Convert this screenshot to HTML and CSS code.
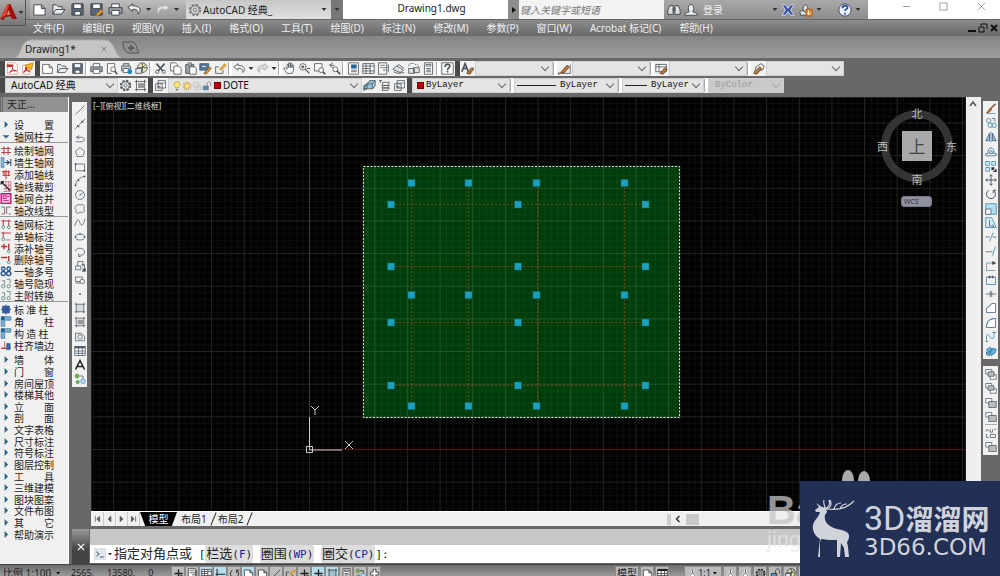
FILE: index.html
```html
<!DOCTYPE html>
<html lang="zh-CN">
<head>
<meta charset="utf-8">
<title>Drawing1.dwg</title>
<link rel="stylesheet" href="styles.css">
</head>
<body>
<svg class="sprite" aria-hidden="true">
  <symbol id="new" viewBox="0 0 16 16"><path d="M2 3h8l4 4v7H2zM10 3v4h4" fill="#fff"/></symbol>
  <symbol id="open" viewBox="0 0 16 16"><path d="M2 13V3h4l2 2h4v3M2 13l3-5h10l-4 5z" fill="#e8eaee"/></symbol>
  <symbol id="save" viewBox="0 0 16 16"><path d="M2 2h12v12H2z" fill="#5c6876"/><path d="M4 2h8v5H4zM5 10h6v4H5z" fill="#fff"/></symbol>
  <symbol id="saveas" viewBox="0 0 16 16"><path d="M2 2h12v12H2z" fill="#5c6876"/><path d="M4 2h8v5H4z" fill="#fff"/><path d="M7 14l6-6 2 2-6 5z" fill="#e9a83a" stroke="#a66a10"/></symbol>
  <symbol id="print" viewBox="0 0 16 16"><path d="M4 6V2h8v4" fill="#fff"/><path d="M1 6h14v6H1z" fill="#9aa0a8"/><path d="M4 9h8v5H4z" fill="#fff"/></symbol>
  <symbol id="undo" viewBox="0 0 16 16"><path d="M6 2L1 6l5 4V8c4-1 6 1 6 5 4-4 2-9-6-9z" fill="#eee"/></symbol>
  <symbol id="redo" viewBox="0 0 16 16"><path d="M10 2l5 4-5 4V8c-4-1-6 1-6 5-4-4-2-9 6-9z" fill="#ddd" stroke="#aaa"/></symbol>
  <symbol id="gear" viewBox="0 0 16 16"><circle cx="8" cy="8" r="6" stroke-dasharray="3 1.7" stroke-width="2"/><circle cx="8" cy="8" r="4.7"/><circle cx="8" cy="8" r="2"/></symbol>
  <symbol id="pdf" viewBox="0 0 16 16"><path d="M2 1h9l3 3v11H2z" fill="#fff" stroke="#d99"/><path d="M1 3h8v3H1z" fill="#c22" stroke="none"/><path d="M4 13c4-3 5-6 4-6s1 5 5 4c-3-1-6 0-9 2" stroke="#b11"/></symbol>
  <symbol id="pdfmail" viewBox="0 0 16 16"><path d="M2 4h9v11H2z" fill="#fff" stroke="#d99"/><path d="M5 4l10-3-2 8-6-1z" fill="#f2b91e" stroke="#c88a10"/><path d="M3 13c4-3 4-6 3-6s1 5 5 4" stroke="#b11" stroke-width="1.5"/></symbol>
  <symbol id="preview" viewBox="0 0 16 16"><path d="M3 14V2h9v4M3 14h5" fill="#fff"/><circle cx="10" cy="9" r="3"/><path d="M12 11l3 4" stroke-width="2"/></symbol>
  <symbol id="publish" viewBox="0 0 16 16"><path d="M4 5V2h7v3M2 5h11v6H2z" fill="#ccd0d4"/><path d="M4 8h7v5H4z" fill="#fff"/><circle cx="12" cy="12" r="3" fill="#1c87c9" stroke="none"/></symbol>
  <symbol id="globe" viewBox="0 0 16 16"><circle cx="9" cy="7" r="6" fill="#e8e3bb"/><path d="M9 1v12M3 7h12M9 7l4-4"/><path d="M1 8h7v6H1z" fill="#dfe8ee"/></symbol>
  <symbol id="cut" viewBox="0 0 16 16"><path d="M3 2l8 9M13 2L5 11" stroke-width="2"/><circle cx="4" cy="12" r="2"/><circle cx="12" cy="12" r="2"/></symbol>
  <symbol id="copy" viewBox="0 0 16 16"><path d="M2 1h6l2 2v8H2z" fill="#fff"/><path d="M6 5h6l3 3v7H6z" fill="#fff"/></symbol>
  <symbol id="paste" viewBox="0 0 16 16"><path d="M2 3h10v11H2z" fill="#9aa0a8"/><path d="M5 1h4v3H5z" fill="#ddd"/><path d="M7 6h6l2 2v7H7z" fill="#fff"/></symbol>
  <symbol id="match" viewBox="0 0 16 16"><path d="M1 2h11v8H1z" fill="#3f7fb5"/><path d="M3 4h6v3H3z" fill="#dde"/><path d="M6 14l7-8 2 2-6 7z" fill="#d59a3c" stroke="#84541c"/></symbol>
  <symbol id="block" viewBox="0 0 16 16"><path d="M2 6v8h9v-4M2 6h4"/><path d="M7 9l6-7 2 2-6 6z" fill="#f1b640" stroke="#b9801a"/></symbol>
  <symbol id="hand" viewBox="0 0 16 16"><path d="M5 14L1 8l2-1 2 2V3h2v4-6h2v6-5h2v5-3h2v6l-2 4z" fill="#fff"/></symbol>
  <symbol id="zoom" viewBox="0 0 16 16"><circle cx="6" cy="6" r="4" fill="#fff"/><path d="M6 4v4M4 6h4M9 9l5 5M11 8h4" stroke-width="1.5"/></symbol>
  <symbol id="zoomwin" viewBox="0 0 16 16"><path d="M2 2h9v9H2z" fill="#fff"/><circle cx="10" cy="10" r="3" fill="#fff"/><path d="M12 12l3 3" stroke-width="2"/></symbol>
  <symbol id="zoomprev" viewBox="0 0 16 16"><path d="M6 1L2 4l4 3M2 4h6"/><circle cx="9" cy="9" r="3" fill="#fff"/><path d="M11 11l4 4" stroke-width="2"/></symbol>
  <symbol id="props" viewBox="0 0 16 16"><path d="M2 1h12v14H2z" fill="#fff"/><path d="M5 3h7v5H5z" fill="#23679c" stroke="none"/><path d="M5 10h7M5 12h7"/></symbol>
  <symbol id="grid" viewBox="0 0 16 16"><path d="M1 2h14v12H1z" fill="#fff"/><path d="M1 5h14M1 8h9M1 11h14M5 2v12M10 2v12"/></symbol>
  <symbol id="tool" viewBox="0 0 16 16"><path d="M2 1h10v14H2z" fill="#fff"/><path d="M4 4h6M4 7h8M7 10h4M14 3v9"/></symbol>
  <symbol id="sheet" viewBox="0 0 16 16"><path d="M1 9l5-4 8 5-4 3zM2 12l5 2 8-1M6 5l2-2 7 5" fill="#e3e6e8"/></symbol>
  <symbol id="markup" viewBox="0 0 16 16"><path d="M2 5c0-4 7-4 8-2 4-1 5 3 3 4" stroke-dasharray="2 1"/><path d="M2 8h7v6H2zM8 7h7v6H8z" fill="#dfe3e6"/></symbol>
  <symbol id="calc" viewBox="0 0 16 16"><path d="M3 1h10v14H3z" fill="#fff"/><path d="M5 3h6v2H5zM5 8h6M5 10h6M5 12h6"/></symbol>
  <symbol id="help" viewBox="0 0 16 16"><path d="M1 1h14v14H1z" fill="#fff"/><path d="M5 6c0-4 6-4 6-1 0 2-3 2-3 5M8 11v2" stroke-width="2"/></symbol>
  <symbol id="textstyle" viewBox="0 0 16 16"><path d="M1 12L5 2l4 10M3 8h5" stroke-width="2"/><path d="M7 14l6-7 3 1-5 7z" fill="#b8793e" stroke="#70401a"/></symbol>
  <symbol id="dimstyle" viewBox="0 0 16 16"><path d="M1 14h14M1 12v4M15 3v11"/><path d="M3 13l8-9 3 2-6 7z" fill="#b8793e" stroke="#70401a"/></symbol>
  <symbol id="tablestyle" viewBox="0 0 16 16"><path d="M1 3h13v9H1zM1 6h13M5 3v9" fill="#fff"/><path d="M6 14l6-7 3 2-5 6z" fill="#b8793e" stroke="#70401a"/></symbol>
  <symbol id="leader" viewBox="0 0 16 16"><path d="M3 13l2-7 6-4 4 3-2 5H8"/><path d="M2 14l7-8 3 2-6 7z" fill="#b8793e" stroke="#70401a"/></symbol>
  <symbol id="layer" viewBox="0 0 16 16"><path d="M5 2h9v9H5zM2 6h8v8H2zM5 5h8M4 9h4M4 11h4" fill="#fff"/></symbol>
  <symbol id="layers2" viewBox="0 0 16 16"><path d="M1 14V8l4-2v6zM5 6h7v6H1zM5 6l3-4h7l-3 4M12 12l3-4V2" fill="#8cc3dc"/></symbol>
  <symbol id="layers3" viewBox="0 0 16 16"><path d="M1 2h4M3 2v3M6 4h8l-2 4H5zM6 8h8l-2 3H5zM6 11h8l-2 3H5z" fill="#eee"/></symbol>
  <symbol id="bulb" viewBox="0 0 16 16"><path d="M6 11c0-3-3-3-3-6 0-5 10-5 10 0 0 3-3 3-3 6z" fill="#f7e77f" stroke="#a98d22"/><path d="M6 14h4" stroke-width="2"/></symbol>
  <symbol id="sun" viewBox="0 0 16 16"><circle cx="8" cy="8" r="6" stroke="#c4912c" stroke-dasharray="1 2.1" stroke-width="3"/><circle cx="8" cy="8" r="4" fill="#fbe880" stroke="#c4912c"/></symbol>
  <symbol id="freeze" viewBox="0 0 16 16"><path d="M2 2h9v8H2zM6 7h8v7H6z" fill="#ddd" stroke="#bbb"/></symbol>
  <symbol id="lock" viewBox="0 0 16 16"><path d="M2 8h8v6H2z" fill="#4591c1"/><path d="M8 8V5c0-5 6-5 6 0v3"/></symbol>
  <symbol id="line" viewBox="0 0 16 16"><path d="M2 14L14 2"/></symbol>
  <symbol id="xline" viewBox="0 0 16 16"><path d="M1 15L15 1"/><path d="M4 10l3 2M10 4l2 2" stroke-width="2"/></symbol>
  <symbol id="pline" viewBox="0 0 16 16"><path d="M2 13h8c5 0 5-6 0-6H5M7 5L3 7l4 2"/></symbol>
  <symbol id="polygon" viewBox="0 0 16 16"><path d="M8 2l6 5-2 7H4L2 7z"/></symbol>
  <symbol id="rect" viewBox="0 0 16 16"><path d="M2 4h12v9H2z"/><path d="M1 3h2v2H1zM13 12h2v2h-2z" fill="#345" stroke="none"/></symbol>
  <symbol id="arc" viewBox="0 0 16 16"><path d="M2 14C3 7 7 3 14 2"/><path d="M1 13h2v2H1zM5 6h2v2H5zM13 1h2v2h-2z" fill="#345" stroke="none"/></symbol>
  <symbol id="circle" viewBox="0 0 16 16"><circle cx="8" cy="8" r="6"/><path d="M8 8l4-3M7 8h2"/></symbol>
  <symbol id="cloud" viewBox="0 0 16 16"><path d="M4 3c2-2 4 0 4 0 4-3 7 1 5 4 3 4-2 7-5 5-4 4-7 0-5-3-3-2-1-6 1-6z"/></symbol>
  <symbol id="spline" viewBox="0 0 16 16"><path d="M1 12c4-11 5-10 7-4 2 5 4 4 7-6"/></symbol>
  <symbol id="ellipse" viewBox="0 0 16 16"><ellipse cx="8" cy="8" rx="6" ry="4"/><path d="M1 8h2M13 8h2M8 3v2" stroke-width="2"/></symbol>
  <symbol id="ellarc" viewBox="0 0 16 16"><path d="M2 7c1-6 12-5 12 1 0 4-5 5-7 4M6 10v4h3"/></symbol>
  <symbol id="insert" viewBox="0 0 16 16"><path d="M5 8V2h7v7M2 8h7v5H2zM10 6h4v6h-3" fill="#eee"/><path d="M15 15h-4l4-4z" fill="#222"/></symbol>
  <symbol id="mkblock" viewBox="0 0 16 16"><path d="M2 4h9v6H2zM2 12h6"/><circle cx="11" cy="10" r="3" fill="#eee"/></symbol>
  <symbol id="point" viewBox="0 0 16 16"><path d="M7 7h2v2H7z" fill="#333" stroke="none"/></symbol>
  <symbol id="hatch" viewBox="0 0 16 16"><path d="M1 3h14M1 13h14M3 1v14M13 1v14"/><path d="M3 11l8-8M5 13l8-8M3 7l4-4M9 13l4-4" stroke-width=".6"/></symbol>
  <symbol id="gradient" viewBox="0 0 16 16"><path d="M1 3h14M1 13h14M3 1v14M13 1v14"/><path d="M5 5h8v6H5z" fill="#999" stroke="none"/></symbol>
  <symbol id="region" viewBox="0 0 16 16"><path d="M2 13V3h8l4 4v6z"/><circle cx="8" cy="8" r="3"/></symbol>
  <symbol id="table" viewBox="0 0 16 16"><path d="M1 2h14v12H1z" fill="#fff"/><path d="M1 3h14" stroke-width="3"/><path d="M1 8h14M1 11h14M6 3v11M11 3v11"/></symbol>
  <symbol id="letter" viewBox="0 0 16 16"><path d="M2 14L8 2l6 12M4 10h8" stroke="#222" stroke-width="2"/></symbol>
  <symbol id="addsel" viewBox="0 0 16 16"><circle cx="4" cy="4" r="2.5" fill="#7cb857" stroke="#47822a"/><path d="M7 4h5v4"/><circle cx="12" cy="11" r="3" fill="#c4e4f3" stroke="#3f8fc0"/><circle cx="5" cy="12" r="2" fill="#7cb857" stroke="#47822a"/></symbol>
  <symbol id="erase" viewBox="0 0 16 16"><path d="M6 9L14 1" stroke="#8b4a22" stroke-width="2"/><path d="M2 13l5-6 2 2-4 4z" fill="#b8793e" stroke="#8b4a22"/><path d="M2 14h12" stroke="#4a8cb6"/></symbol>
  <symbol id="copyobj" viewBox="0 0 16 16"><circle cx="5" cy="5" r="3" stroke="#2d82ac"/><circle cx="7" cy="11" r="3" stroke="#2d82ac"/><circle cx="12" cy="11" r="3" stroke="#2d82ac"/><path d="M9 2h4v4"/></symbol>
  <symbol id="mirror" viewBox="0 0 16 16"><path d="M6 3v10H1zM10 3v10h5z" fill="#9ac7dc" stroke="#357"/><path d="M8 1v14"/></symbol>
  <symbol id="offset" viewBox="0 0 16 16"><path d="M1 13h14v-3h-3C13 0 3 0 4 10H1z" stroke="#2a6486"/><path d="M6 10c-1-5 5-5 4 0z" fill="#cce5ef"/></symbol>
  <symbol id="array" viewBox="0 0 16 16"><path d="M1 2h5v5H1zM9 2h5v5H9zM1 10h5v5H1z" stroke="#2e82ab" fill="#dceff7"/><path d="M9 10h3v3H9zM15 16h-4l4-4z" fill="#222"/></symbol>
  <symbol id="move" viewBox="0 0 16 16"><path d="M8 1v14M1 8h14M6 3l2-2 2 2M6 13l2 2 2-2M3 6L1 8l2 2M13 6l2 2-2 2" stroke-width="1.3"/></symbol>
  <symbol id="rotate" viewBox="0 0 16 16"><path d="M5 3a6 6 0 1 0 6 0M11 7V3h4" stroke-width="1.3"/></symbol>
  <symbol id="scale" viewBox="0 0 16 16"><path d="M1 1h14v14H1z" fill="#b5e0f3" stroke="#2e82ab"/><path d="M1 8h7v7H1z" fill="#fff"/></symbol>
  <symbol id="stretch" viewBox="0 0 16 16"><path d="M1 1h8l6 13H1z" fill="#d9edf6" stroke="#2e82ab"/><path d="M6 4v8h6M10 10l2 2-2 2"/></symbol>
  <symbol id="trim" viewBox="0 0 16 16"><path d="M1 8h5M10 8h5"/><path d="M6 14l5-12" stroke="#2e82ab"/></symbol>
  <symbol id="extend" viewBox="0 0 16 16"><path d="M1 9h9"/><path d="M10 14l4-12" stroke="#2e82ab"/></symbol>
  <symbol id="breakp" viewBox="0 0 16 16"><path d="M2 4h12M2 4v10h12" stroke="#5a87a2"/><path d="M10 2l4 2-4 2z" fill="#333"/></symbol>
  <symbol id="break" viewBox="0 0 16 16"><path d="M6 4H2v10h12V4h-4" stroke="#2e82ab"/><path d="M5 3h2v2H5zM9 3h2v2H9z" fill="#333"/></symbol>
  <symbol id="join" viewBox="0 0 16 16"><path d="M1 8h14M7 4v8M9 4v8"/></symbol>
  <symbol id="chamfer" viewBox="0 0 16 16"><path d="M2 14V9l7-7h5v12z" fill="#fff"/><path d="M2 9l7-7" stroke="#2e82ab"/></symbol>
  <symbol id="fillet" viewBox="0 0 16 16"><path d="M2 14c0-8 4-12 12-12v12z" fill="#fff"/><path d="M2 14C2 6 6 2 14 2" stroke="#2e82ab"/></symbol>
  <symbol id="blend" viewBox="0 0 16 16"><path d="M2 14V6c3-6 6 10 10 2V2" stroke="#2e82ab"/><path d="M1 14h3M10 2h5"/></symbol>
  <symbol id="explode" viewBox="0 0 16 16"><path d="M2 6l5-3 3 3-5 4zM7 8l4-4 4 2-2 5-5 3zM2 9l5 2-1 3-4-1z" fill="#60b6d9" stroke="#236c92"/></symbol>
  <symbol id="front" viewBox="0 0 16 16"><path d="M1 2h8v6H1zM7 9h8v6H7z" fill="#fff"/><path d="M4 5h8v6H4z" fill="#bbb"/></symbol>
  <symbol id="back" viewBox="0 0 16 16"><path d="M1 2h8v6H1z" fill="#fff"/><path d="M5 6h10v8H5z" fill="#bbb"/></symbol>
  <symbol id="ann" viewBox="0 0 16 16"><path d="M1 6l2-3 2 3M7 3v4h3V3M12 3h3M7 10h7v4H7z"/><path d="M2 9v5h3"/></symbol>
  <symbol id="net" viewBox="0 0 16 16"><path d="M5 2v12M11 2v12M1 5h14M1 11h14" stroke="#b54452" stroke-width="1.6"/></symbol>
  <symbol id="wall" viewBox="0 0 16 16"><path d="M1 1h4v14H1z" fill="#8ebede" stroke="#36688e"/><path d="M6 8h7M15 3v10M9 5l4 3-4 3" stroke="#246" stroke-width="1.5"/></symbol>
  <symbol id="addaxis" viewBox="0 0 16 16"><path d="M2 4h12M5 2v8M8 1v14M12 2v8M3 9h11" stroke="#b33" stroke-width="1.5"/></symbol>
  <symbol id="crop" viewBox="0 0 16 16"><path d="M4 1h11v14H4M8 1v14M12 1v14M4 6h11M4 11h11" stroke="#c0526a"/><path d="M1 1l13 13M1 1h4M1 1v4" stroke="#222" stroke-width="2"/></symbol>
  <symbol id="merge" viewBox="0 0 16 16"><path d="M1 1h14v14H1z" fill="#f6bed7" stroke="#cc1277" stroke-width="2"/><path d="M4 4h4v4H4zM9 5h4M4 11h8" stroke="#c43a93" stroke-width="1.5"/></symbol>
  <symbol id="axistype" viewBox="0 0 16 16"><path d="M1 3h5v10H1M9 13V3h6M12 13h3" stroke="#8d5558" stroke-width="1.3"/></symbol>
  <symbol id="dim" viewBox="0 0 16 16"><path d="M1 3h14M4 1v9M12 1v9" stroke="#b8414b" stroke-width="1.5"/><circle cx="4" cy="12" r="2" stroke="#21756b"/><circle cx="12" cy="12" r="2" stroke="#21756b"/></symbol>
  <symbol id="dim1" viewBox="0 0 16 16"><path d="M1 3h14M4 1v9" stroke="#b8414b" stroke-width="1.5"/><circle cx="4" cy="12" r="2" stroke="#21756b"/><path d="M8 13h7" stroke="#b8414b"/></symbol>
  <symbol id="addno" viewBox="0 0 16 16"><path d="M1 5h9M5 1v8M12 1v9" stroke="#c02c33" stroke-width="2"/><circle cx="12" cy="12" r="2" stroke="#21756b"/></symbol>
  <symbol id="delno" viewBox="0 0 16 16"><path d="M1 5h9M12 3v7" stroke="#c02c33" stroke-width="2"/><circle cx="12" cy="12" r="2" stroke="#21756b"/></symbol>
  <symbol id="multi" viewBox="0 0 16 16"><circle cx="4" cy="4" r="2.5"/><circle cx="12" cy="4" r="2.5"/><circle cx="4" cy="11" r="3"/><circle cx="12" cy="11" r="3"/></symbol>
  <symbol id="swap" viewBox="0 0 16 16"><path d="M2 4h4v5M9 2h5v6" stroke="#37745c"/><circle cx="4" cy="12" r="2.5" stroke="#37745c"/><circle cx="12" cy="12" r="2.5" stroke="#37745c"/></symbol>
  <symbol id="column" viewBox="0 0 16 16"><path d="M3 3h10v10H3z" fill="#36599c" stroke="#36599c"/><path d="M8 1v14M1 8h14" stroke="#36599c" stroke-width="2"/></symbol>
  <symbol id="corner" viewBox="0 0 16 16"><path d="M1 15V1h14v5H6v9z" fill="#7fb4d2" stroke="#2e6d96"/><path d="M1 1h5v5H1z" fill="#225a8c" stroke="none"/></symbol>
  <symbol id="align" viewBox="0 0 16 16"><path d="M1 12h14" stroke="#c33" stroke-width="2"/><path d="M6 2v9" stroke="#c33"/><path d="M9 5h5v9H9z" fill="#3166a8" stroke="#3166a8"/></symbol>
  <symbol id="tri" viewBox="0 0 16 16"><path d="M6 3l5 5-5 5z" fill="#2a6583" stroke="none"/></symbol>
  <symbol id="trid" viewBox="0 0 16 16"><path d="M3 6h10l-5 5z" fill="#2a6583" stroke="none"/></symbol>
  <symbol id="close" viewBox="0 0 16 16"><path d="M3 3l10 10M13 3L3 13"/></symbol>
  <symbol id="binoc" viewBox="0 0 16 16"><path d="M3 3h4v10H1V8zM9 3h4l2 5v5H9zM7 6h2v3H7z" fill="#ddd"/></symbol>
  <symbol id="user" viewBox="0 0 16 16"><path d="M5 7c-1-7 7-7 6 0l-1 3 5 2v2H1v-2l5-2z" fill="#eee"/></symbol>
  <symbol id="exchange" viewBox="0 0 16 16"><path d="M1 2h4l3 4 3-4h4l-4 6 4 6h-4l-3-4-3 4H1l4-6z" fill="#3b56a3" stroke="#dce4fa"/></symbol>
  <symbol id="auth" viewBox="0 0 16 16"><path d="M5 9c-2-9 6-9 5-1M1 11c2-4 4-2 6-1l3 4H2z" fill="#ddd"/><path d="M8 7h7v8H8z" fill="#e78325" stroke="#b05a10"/><path d="M11 8v5M9 11l2 2 3-2" stroke="#fff"/></symbol>
  <symbol id="question" viewBox="0 0 16 16"><circle cx="8" cy="8" r="7" fill="#eef2fb" stroke="#345"/><path d="M5 6c0-4 6-4 6-1 0 2-3 2-3 4M8 11v2" stroke="#234d94" stroke-width="2"/></symbol>
  <symbol id="prompt" viewBox="0 0 16 16"><path d="M0 1h16v14H0z" fill="#e3e8ee" stroke="#ccd"/><path d="M3 5l4 3-4 3M8 12h5" stroke="#456" stroke-width="1.3"/></symbol>
  <symbol id="cross" viewBox="0 0 16 16"><path d="M8 2v12M2 8h12" stroke-width="2"/><path d="M10 11h4"/></symbol>
  <symbol id="ortho" viewBox="0 0 16 16"><path d="M3 1v13M1 9h14" stroke-width="1.5"/></symbol>
  <symbol id="angle" viewBox="0 0 16 16"><path d="M13 3L3 13h10"/></symbol>
  <symbol id="plus" viewBox="0 0 16 16"><path d="M6 2h4v4h4v4h-4v4H6v-4H2V6h4z" fill="#f5f5f5"/></symbol>
  <symbol id="annot" viewBox="0 0 16 16"><path d="M8 2v5L2 14M8 7l6 7M5 11h6" stroke="#fff" stroke-width="3"/><path d="M8 2v5L2 14M8 7l6 7"/></symbol>
</svg>

<div class="app">
  <header class="titlebar">
    <div class="quick">
      <button aria-label="新建"><svg><use href="#new"/></svg></button>
      <button aria-label="打开"><svg><use href="#open"/></svg></button>
      <button aria-label="保存"><svg><use href="#save"/></svg></button>
      <button aria-label="另存为"><svg><use href="#saveas"/></svg></button>
      <button aria-label="打印"><svg><use href="#print"/></svg></button>
      <button aria-label="放弃"><svg><use href="#undo"/></svg></button><i class="caret"></i>
      <button aria-label="重做"><svg><use href="#redo"/></svg></button><i class="caret"></i>
    </div>
    <div class="workspace"><svg><use href="#gear"/></svg><select aria-label="工作空间"><option>AutoCAD 经典_</option></select><i class="caret"></i></div>
    <button class="more" aria-label="更多"><i class="caret"></i></button>
    <div class="doc-title">Drawing1.dwg</div>
    <button class="search-toggle" aria-label="展开"></button>
    <input class="search" type="text" placeholder="键入关键字或短语" aria-label="搜索">
    <div class="account">
      <button aria-label="搜索"><svg><use href="#binoc"/></svg></button>
      <button class="login"><svg><use href="#user"/></svg>登录</button>
      <i class="caret"></i>
      <button aria-label="Exchange"><svg><use href="#exchange"/></svg></button>
      <button aria-label="更新"><svg><use href="#auth"/></svg></button><i class="caret"></i>
      <button class="ask" aria-label="帮助"><svg><use href="#question"/></svg></button><i class="caret"></i>
    </div>
    <div class="window-buttons">
      <button aria-label="最小化"><svg viewBox="0 0 10 10"><path d="M1 5h8"/></svg></button>
      <button aria-label="最大化"><svg viewBox="0 0 10 10"><path d="M1 1h8v8H1z"/></svg></button>
      <button aria-label="关闭"><svg viewBox="0 0 10 10"><path d="M1 1l8 8M9 1L1 9"/></svg></button>
    </div>
  </header>
  <button class="app-button" aria-label="应用程序菜单">
    <svg class="logo-a" viewBox="0 0 18 18"><path d="M8 0h3l7 16h-5l-2-3-6 1-1 3-4-1z" fill="#9d1009" stroke="none"/><path d="M8 0h2L6 12l-6 4z" fill="#e5432d" stroke="none"/><path d="M9 6l2 5-4 1z" fill="#d98676" stroke="none"/></svg><i class="caret"></i>
  </button>

  <nav class="menubar">
    <button>文件(F)</button><button>编辑(E)</button><button>视图(V)</button><button>插入(I)</button><button>格式(O)</button><button>工具(T)</button><button>绘图(D)</button><button>标注(N)</button><button>修改(M)</button><button>参数(P)</button><button>窗口(W)</button><button>Acrobat 标记(C)</button><button>帮助(H)</button>
    <div class="mdi">
      <svg viewBox="0 0 10 10"><path d="M1 8h8" stroke-width="2"/></svg>
      <svg viewBox="0 0 10 10"><path d="M3 1h6v5M1 4h5v5H1zM3 3V1"/></svg>
      <svg viewBox="0 0 10 10"><path d="M2 2l6 6M8 2L2 8" stroke-width="2"/></svg>
    </div>
  </nav>

  <div class="filetabs">
    <div class="filetab">
      <svg class="tab-shape" viewBox="0 0 108 19" preserveAspectRatio="none"><path d="M0 19C8 18 6 1 17 1h74c10 0 10 17 17 18" fill="#c5c5c5" stroke="#aaa"/></svg>
      <span>Drawing1*</span><button aria-label="关闭"><svg><use href="#close"/></svg></button>
    </div>
    <button class="newtab" aria-label="新建选项卡"><svg viewBox="0 0 18 13"><path d="M1 1h10c4 2 4 8 6 11H7C3 12 1 6 1 1z" fill="#8e8e8e" stroke="#555"/><path d="M9 4v6M6 7h6" stroke="#5c5c5c" stroke-width="2"/></svg></button>
  </div>

  <div class="toolbars">
    <div class="toolrow">
      <div class="toolbar">
        <button aria-label="PDF"><svg><use href="#pdf"/></svg></button><button aria-label="PDF 邮件"><svg><use href="#pdfmail"/></svg></button>
      </div>
      <div class="toolbar">
        <button aria-label="新建"><svg><use href="#new"/></svg></button><button aria-label="打开"><svg><use href="#open"/></svg></button><button aria-label="保存"><svg><use href="#save"/></svg></button><hr>
        <button aria-label="打印"><svg><use href="#print"/></svg></button><button aria-label="预览"><svg><use href="#preview"/></svg></button><button aria-label="发布"><svg><use href="#publish"/></svg></button><button aria-label="三维打印"><svg><use href="#globe"/></svg></button><hr>
        <button aria-label="剪切"><svg><use href="#cut"/></svg></button><button aria-label="复制"><svg><use href="#copy"/></svg></button><button aria-label="粘贴"><svg><use href="#paste"/></svg></button><button aria-label="特性匹配"><svg><use href="#match"/></svg></button><button aria-label="块编辑器"><svg><use href="#block"/></svg></button><hr>
        <button aria-label="放弃"><svg><use href="#undo"/></svg></button><i class="caret"></i><button aria-label="重做"><svg><use href="#redo"/></svg></button><i class="caret"></i><hr>
        <button aria-label="平移"><svg><use href="#hand"/></svg></button><button aria-label="缩放"><svg><use href="#zoom"/></svg></button><button aria-label="窗口缩放"><svg><use href="#zoomwin"/></svg></button><button aria-label="缩放上一个"><svg><use href="#zoomprev"/></svg></button><hr>
        <button aria-label="特性"><svg><use href="#props"/></svg></button><button aria-label="设计中心"><svg><use href="#grid"/></svg></button><button aria-label="工具选项板"><svg><use href="#tool"/></svg></button><button aria-label="图纸集"><svg><use href="#sheet"/></svg></button><button aria-label="标记集"><svg><use href="#markup"/></svg></button><button aria-label="计算器"><svg><use href="#calc"/></svg></button><hr>
        <button aria-label="帮助"><svg><use href="#help"/></svg></button>
      </div>
      <div class="toolbar">
        <button aria-label="文字样式"><svg><use href="#textstyle"/></svg></button><div class="combo w-style"><select aria-label="文字样式"><option></option></select></div><hr>
        <button aria-label="标注样式"><svg><use href="#dimstyle"/></svg></button><div class="combo w-style"><select aria-label="标注样式"><option></option></select></div><hr>
        <button aria-label="表格样式"><svg><use href="#tablestyle"/></svg></button><div class="combo w-style"><select aria-label="表格样式"><option></option></select></div><hr>
        <button aria-label="引线样式"><svg><use href="#leader"/></svg></button><div class="combo w-style"><select aria-label="引线样式"><option></option></select></div>
      </div>
    </div>
    <div class="toolrow">
      <div class="toolbar">
        <div class="combo w-space"><select aria-label="工作空间"><option>AutoCAD 经典</option></select></div>
        <button aria-label="设置"><svg><use href="#gear"/></svg></button><button aria-label="保存工作空间"><svg><use href="#gradient"/></svg></button>
      </div>
      <div class="toolbar">
        <button aria-label="图层特性"><svg><use href="#layer"/></svg></button>
        <div class="combo w-layer"><svg><use href="#bulb"/></svg><svg><use href="#sun"/></svg><svg><use href="#freeze"/></svg><svg><use href="#lock"/></svg><b class="swatch"></b><select aria-label="图层"><option>DOTE</option></select></div>
        <button aria-label="置为当前"><svg><use href="#layers2"/></svg></button><button aria-label="上一图层"><svg><use href="#layers3"/></svg></button><button aria-label="图层状态"><svg><use href="#layer"/></svg></button>
      </div>
      <div class="toolbar mono">
        <div class="combo w-color"><b class="swatch"></b><select aria-label="颜色"><option>ByLayer</option></select></div><hr>
        <div class="combo w-type"><b class="rule"></b><select aria-label="线型"><option>ByLayer</option></select></div><hr>
        <div class="combo w-weight"><b class="rule"></b><select aria-label="线宽"><option>ByLayer</option></select></div><hr>
        <div class="combo w-plot"><select aria-label="打印样式" disabled><option>ByColor</option></select></div>
      </div>
    </div>
  </div>

  <main class="body">
    <aside class="palette">
      <h2>天正...</h2>
      <ul class="rows n2">
        <li><svg><use href="#tri"/></svg><span class="spread">设 置</span></li>
        <li><svg><use href="#trid"/></svg><span>轴网柱子</span></li>
      </ul>
      <ul class="rows n6">
        <li><svg><use href="#net"/></svg><span>绘制轴网</span></li>
        <li><svg><use href="#wall"/></svg><span>墙生轴网</span></li>
        <li><svg><use href="#addaxis"/></svg><span>添加轴线</span></li>
        <li><svg><use href="#crop"/></svg><span>轴线裁剪</span></li>
        <li><svg><use href="#merge"/></svg><span>轴网合并</span></li>
        <li><svg><use href="#axistype"/></svg><span>轴改线型</span></li>
      </ul>
      <ul class="rows n7">
        <li><svg><use href="#dim"/></svg><span>轴网标注</span></li>
        <li><svg><use href="#dim1"/></svg><span>单轴标注</span></li>
        <li><svg><use href="#addno"/></svg><span>添补轴号</span></li>
        <li><svg><use href="#delno"/></svg><span>删除轴号</span></li>
        <li><svg class="blue"><use href="#multi"/></svg><span>一轴多号</span></li>
        <li><svg><use href="#swap"/></svg><span>轴号隐现</span></li>
        <li><svg><use href="#swap"/></svg><span>主附转换</span></li>
      </ul>
      <ul class="rows n4">
        <li><svg><use href="#column"/></svg><span>标 准 柱</span></li>
        <li><svg><use href="#corner"/></svg><span class="spread">角 柱</span></li>
        <li><svg><use href="#corner"/></svg><span>构 造 柱</span></li>
        <li><svg><use href="#align"/></svg><span>柱齐墙边</span></li>
      </ul>
      <ul class="rows n16">
        <li><svg><use href="#tri"/></svg><span class="spread">墙 体</span></li>
        <li><svg><use href="#tri"/></svg><span class="spread">门 窗</span></li>
        <li><svg><use href="#tri"/></svg><span>房间屋顶</span></li>
        <li><svg><use href="#tri"/></svg><span>楼梯其他</span></li>
        <li><svg><use href="#tri"/></svg><span class="spread">立 面</span></li>
        <li><svg><use href="#tri"/></svg><span class="spread">剖 面</span></li>
        <li><svg><use href="#tri"/></svg><span>文字表格</span></li>
        <li><svg><use href="#tri"/></svg><span>尺寸标注</span></li>
        <li><svg><use href="#tri"/></svg><span>符号标注</span></li>
        <li><svg><use href="#tri"/></svg><span>图层控制</span></li>
        <li><svg><use href="#tri"/></svg><span class="spread">工 具</span></li>
        <li><svg><use href="#tri"/></svg><span>三维建模</span></li>
        <li><svg><use href="#tri"/></svg><span>图块图案</span></li>
        <li><svg><use href="#tri"/></svg><span>文件布图</span></li>
        <li><svg><use href="#tri"/></svg><span class="spread">其 它</span></li>
        <li><svg><use href="#tri"/></svg><span>帮助演示</span></li>
      </ul>
    </aside>

    <div class="work">
      <div class="stage">
        <div class="side draw-side">
          <div class="vbar draw-bar">
            <button aria-label="直线"><svg><use href="#line"/></svg></button><button aria-label="构造线"><svg><use href="#xline"/></svg></button><button aria-label="多段线"><svg><use href="#pline"/></svg></button><button aria-label="多边形"><svg><use href="#polygon"/></svg></button><button aria-label="矩形"><svg><use href="#rect"/></svg></button><button aria-label="圆弧"><svg><use href="#arc"/></svg></button><button aria-label="圆"><svg><use href="#circle"/></svg></button><button aria-label="修订云线"><svg><use href="#cloud"/></svg></button><button aria-label="样条曲线"><svg><use href="#spline"/></svg></button><button aria-label="椭圆"><svg><use href="#ellipse"/></svg></button><button aria-label="椭圆弧"><svg><use href="#ellarc"/></svg></button><button aria-label="插入块"><svg><use href="#insert"/></svg></button><button aria-label="创建块"><svg><use href="#mkblock"/></svg></button><button aria-label="点"><svg><use href="#point"/></svg></button><button aria-label="图案填充"><svg><use href="#hatch"/></svg></button><button aria-label="渐变色"><svg><use href="#gradient"/></svg></button><button aria-label="面域"><svg><use href="#region"/></svg></button><button aria-label="表格"><svg><use href="#table"/></svg></button><button aria-label="多行文字"><svg><use href="#letter"/></svg></button><button aria-label="添加选定对象"><svg><use href="#addsel"/></svg></button>
          </div>
        </div>
        <div class="drawing">
          <div class="view">
            <div class="canvas">
              <svg class="model" viewBox="91 97 875 415" preserveAspectRatio="xMinYMin slice">
                <defs>
                  <pattern id="minor" x="309" y="449" width="6.53" height="6.53" patternUnits="userSpaceOnUse"><path d="M0 .5h6.53M.5 0v6.53" stroke="#fff" stroke-opacity=".045"/></pattern>
                  <pattern id="major" x="309" y="449" width="32.65" height="32.65" patternUnits="userSpaceOnUse"><path d="M0 .5h32.65M.5 0v32.65" stroke="#fff" stroke-opacity=".09"/></pattern>
                </defs>
                <rect x="91" y="97" width="875" height="415" fill="#020203"/>
                <rect x="363" y="166" width="317" height="252" fill="#003d0b"/>
                <rect x="91" y="97" width="875" height="415" fill="url(#minor)"/>
                <rect x="91" y="97" width="875" height="415" fill="url(#major)"/>
                <path d="M310 449.5h656" stroke="#541717"/>
                <path d="M309.5 97v352" stroke="#2f402f"/>
                <rect x="363.500" y="166.500" width="316" height="251" fill="none" stroke="#c8e0c8" stroke-dasharray="2 1.500"/>
                <path d="M391 204.500h254M391 266.500h254M391 322.500h254M391 385.500h254M411.500 183v223M468.500 183v223M537.500 183v223M624.500 183v223" stroke="#6f4614" stroke-dasharray="2 2"/>
                <path d="M408 179.500h7v7h-7zM465 179.500h7v7h-7zM533 179.500h7v7h-7zM621 179.500h7v7h-7zM408 291.500h7v7h-7zM465 291.500h7v7h-7zM533 291.500h7v7h-7zM621 291.500h7v7h-7zM408 402.500h7v7h-7zM465 402.500h7v7h-7zM533 402.500h7v7h-7zM621 402.500h7v7h-7zM387.500 201h7v7h-7zM514.500 201h7v7h-7zM642 201h7v7h-7zM387.500 263h7v7h-7zM514.500 263h7v7h-7zM642 263h7v7h-7zM387.500 319h7v7h-7zM514.500 319h7v7h-7zM642 319h7v7h-7zM387.500 382h7v7h-7zM514.500 382h7v7h-7zM642 382h7v7h-7z" fill="#1ba0bf" stroke="#0c6a6e" stroke-width=".5"/>
                <path d="M309.500 417v33H342M306.500 446.500h6v6h-6zM311 406l4 4 4-4M315 410v5M345 441l8 8M353 441l-8 8" fill="none" stroke="#ccc"/>
              </svg>
              <div class="view-label">[−][俯视][二维线框]</div>
              <div class="cube">
                <span class="north">北</span><span class="west">西</span><button class="face">上</button><span class="east">东</span><span class="south">南</span>
              </div>
              <button class="wcs">WCS</button>
              <svg class="paw" viewBox="0 0 30 20"><ellipse cx="7" cy="12" rx="6" ry="10"/><ellipse cx="23" cy="13" rx="6" ry="10"/></svg>
            </div>
            <div class="vscroll"><svg viewBox="0 0 10 10"><path d="M2 7l3-4 3 4" stroke-width="1.500"/></svg></div>
          </div>
          <div class="layouts">
            <button class="nav" aria-label="第一个"><svg viewBox="0 0 10 10"><path d="M2 1v8M8 1v8L4 5z" fill="#555"/></svg></button><button class="nav" aria-label="上一个"><svg viewBox="0 0 10 10"><path d="M7 1v8L3 5z" fill="#555"/></svg></button><button class="nav" aria-label="下一个"><svg viewBox="0 0 10 10"><path d="M3 1v8l4-4z" fill="#555"/></svg></button><button class="nav" aria-label="最后一个"><svg viewBox="0 0 10 10"><path d="M8 1v8M2 1v8l4-4z" fill="#555"/></svg></button>
            <button class="layout current">模型</button><button class="layout">布局1</button><button class="layout">布局2</button>
            <div class="hscroll"><b class="split"></b><svg viewBox="0 0 10 10"><path d="M6 2L3 5l3 3" stroke-width="1.500"/></svg><b class="thumb"></b></div>
          </div>
        </div>
        <div class="side modify-side">
          <div class="vbar modify-bar">
            <button aria-label="删除"><svg><use href="#erase"/></svg></button><button aria-label="复制"><svg><use href="#copyobj"/></svg></button><button aria-label="镜像"><svg><use href="#mirror"/></svg></button><button aria-label="偏移"><svg><use href="#offset"/></svg></button><button aria-label="阵列"><svg><use href="#array"/></svg></button><button aria-label="移动"><svg><use href="#move"/></svg></button><button aria-label="旋转"><svg><use href="#rotate"/></svg></button><button aria-label="缩放"><svg><use href="#scale"/></svg></button><button aria-label="拉伸"><svg><use href="#stretch"/></svg></button><button aria-label="修剪"><svg><use href="#trim"/></svg></button><button aria-label="延伸"><svg><use href="#extend"/></svg></button><button aria-label="打断于点"><svg><use href="#breakp"/></svg></button><button aria-label="打断"><svg><use href="#break"/></svg></button><button aria-label="合并"><svg><use href="#join"/></svg></button><button aria-label="倒角"><svg><use href="#chamfer"/></svg></button><button aria-label="圆角"><svg><use href="#fillet"/></svg></button><button aria-label="光顺曲线"><svg><use href="#blend"/></svg></button><button aria-label="分解"><svg><use href="#explode"/></svg></button>
          </div>
          <div class="vbar order-bar">
            <button aria-label="前置"><svg><use href="#front"/></svg></button><button aria-label="后置"><svg><use href="#front"/></svg></button><button aria-label="置于对象之上"><svg><use href="#back"/></svg></button><button aria-label="置于对象之下"><svg><use href="#back"/></svg></button><hr><button aria-label="注释前置"><svg><use href="#ann"/></svg></button><button aria-label="填充后置"><svg><use href="#back"/></svg></button>
          </div>
        </div>
      </div>
      <section class="command">
        <div class="command-grip"><button aria-label="关闭"><svg><use href="#close"/></svg></button></div>
        <div class="command-body">
          <div class="history"></div>
          <div class="prompt"><svg><use href="#prompt"/></svg><i class="caret"></i><span>指定对角点或<code> [</code><kbd>栏选<code>(<em>F</em>)</code></kbd><code> </code><kbd>圈围<code>(<em>WP</em>)</code></kbd><code> </code><kbd>圈交<code>(<em>CP</em>)</code></kbd><code>]:</code></span></div>
        </div>
      </section>
    </div>
  </main>

  <footer class="status">
    <div class="ratio">比例 1:100<i class="caret"></i></div>
    <div class="coords"><span>2565,</span><span>13580,</span><span>0</span></div>
    <div class="toggles">
      <button aria-label="推断约束"><svg><use href="#cross"/></svg></button><button aria-label="捕捉"><svg><use href="#tool"/></svg></button><button class="on" aria-label="栅格"><svg><use href="#grid"/></svg></button><button class="on" aria-label="正交"><svg><use href="#ortho"/></svg></button><button aria-label="极轴"><svg><use href="#rotate"/></svg></button><button class="on" aria-label="对象捕捉"><svg><use href="#new"/></svg></button><button aria-label="三维捕捉"><svg><use href="#new"/></svg></button><button aria-label="追踪"><svg><use href="#angle"/></svg></button><button aria-label="动态 UCS"><svg><use href="#block"/></svg></button><button aria-label="动态输入"><svg><use href="#cross"/></svg></button><button class="on" aria-label="线宽"><svg><use href="#cross"/></svg></button><button class="on" aria-label="透明度"><svg><use href="#hatch"/></svg></button><button aria-label="快捷特性"><svg><use href="#calc"/></svg></button><button aria-label="选择循环"><svg><use href="#addsel"/></svg></button><button aria-label="注释监视器"><svg><use href="#plus"/></svg></button>
    </div>
    <div class="right">
      <button class="model-btn">模型</button><button aria-label="布局"><svg><use href="#new"/></svg></button><button aria-label="快速查看"><svg><use href="#table"/></svg></button>
      <button class="anno"><svg><use href="#annot"/></svg>1:1<i class="caret"></i></button><button aria-label="注释可见性"><svg><use href="#annot"/></svg></button><button aria-label="自动缩放"><svg><use href="#annot"/></svg></button><button aria-label="工作空间"><svg><use href="#gear"/></svg></button><button aria-label="锁定"><svg><use href="#lock"/></svg></button><button aria-label="硬件加速"><svg><use href="#globe"/></svg></button><button aria-label="隔离"><svg><use href="#layers2"/></svg></button>
    </div>
  </footer>

  <div class="baidu"><strong>Ba</strong><span>jing</span></div>
  <div class="brand">
    <svg class="deer" viewBox="0 0 44 60"><path d="M3 11l4-3-3-4 6 4 4 1 1 4-2 3c-1 5 1 8 5 11 6 4 13 3 18 7 2 3 1 6-1 9l1 5 1 10h-4l-1-9-3-5-1 14h-3l0-17c-6 0-10 0-16-1l-1 3 0 15H6l2-18C3 37 0 32 1 26c1-5 6-8 7-13l-4 0z"/><path class="antler" d="M13 10c0-4-2-5-1-9M13 10c5-3 5-5 4-9M14 10c5-1 6-5 4-9M14 10c12 1 20 0 28-8M22 10c1-4 4-6 7-6M28 10c1-3 3-5 7-5"/></svg>
    <div class="brand-text">
      <div class="brand-name"><span>3D</span><strong>溜溜网</strong></div>
      <div class="brand-url">3D66.COM</div>
    </div>
  </div>
</div>
</body>
</html>
```
FILE: styles.css
```css
* { box-sizing: border-box; }
body { margin: 0; font: 10px/14px "Noto Sans", "Noto Sans CJK SC", sans-serif; color: #222; }
button { margin: 0; padding: 0; border: 0; background: none; font: inherit; color: inherit; display: flex; align-items: center; justify-content: center; }
svg { fill: none; stroke: currentColor; width: 13px; height: 13px; flex: none; display: block; }
select, input { font: inherit; color: inherit; margin: 0; padding: 0; border: 0; border-radius: 0; background: none; appearance: none; min-width: 0; }
.sprite { position: absolute; width: 0; height: 0; }
.app { position: relative; display: flex; flex-direction: column; height: 100vh; overflow: hidden; background: #686868; }
.caret { flex: none; width: 8px; height: 3px; background: #333; clip-path: polygon(20% 0, 80% 0, 50% 100%); }

.titlebar { flex: 0 0 20px; display: flex; background: linear-gradient(#a9a9a9, #8c8c8c); color: #3c434c; border-bottom: 1px solid #666; }
.quick { flex: 0 0 156px; margin-left: 30px; display: flex; align-items: center; background: linear-gradient(#bdbdbd, #989898); }
.quick button { width: 19px; }
.quick svg { width: 15px; height: 15px; }
.quick .caret { width: 9px; }
.workspace { flex: 0 0 145px; display: flex; align-items: center; background: linear-gradient(#c6c6c6, #e0e0e0); padding: 0 3px 0 2px; color: #222; }
.workspace svg { width: 14px; height: 14px; color: #777; }
.workspace select { flex: 1; padding-left: 1px; }
.more { width: 12px; background: #777; }
.doc-title { flex: 1 1 165px; text-align: center; background: #fff; color: #222; line-height: 16px; padding-left: 12px; }
.search-toggle { width: 11px; background: #8c8c8c; }
.search-toggle::after { content: ""; border: 3px solid transparent; border-left: 4px solid #111; border-right: 0; }
.search { flex: 0 0 145px; background: #f3f3f3; font-style: italic; padding-left: 1px; }
.search::placeholder { color: #777; opacity: 1; }
.account { flex: 0 0 204px; display: flex; align-items: center; padding-left: 1px; }
.account button { flex: none; width: 18px; }
.account svg { width: 14px; height: 14px; }
.account .login { width: 88px; justify-content: flex-start; gap: 5px; padding-left: 1px; color: #eee; }
.account .login svg { color: #3c434c; }
.account .ask { margin-left: 13px; }
.window-buttons { flex: 0 0 132px; display: flex; justify-content: space-around; background: #fff; color: #999; padding: 0 0 7px 20px; }
.window-buttons svg { width: 9px; height: 9px; }
.app-button { position: absolute; left: 0; top: 0; width: 26px; height: 26px; background: linear-gradient(#aaa, #777); border: 1px solid #555; border-width: 0 1px 1px 0; }
.logo-a { width: 17px; height: 17px; }

.menubar { flex: 0 0 16px; display: flex; gap: 18px; padding: 0 1px 0 33px; background: linear-gradient(#8c8c8c, #686868); color: #f0f0f0; white-space: nowrap; }
.mdi { margin-left: auto; display: flex; align-items: center; gap: 1px; color: #111; }
.mdi svg { width: 10px; height: 10px; }

.filetabs { flex: 0 0 22px; display: flex; align-items: flex-end; padding-left: 14px; background: linear-gradient(#858585, #9c9c9c); }
.filetab { position: relative; width: 108px; height: 19px; display: flex; align-items: center; justify-content: space-between; padding: 0 14px 0 11px; }
.tab-shape { position: absolute; inset: 0; width: 100%; height: 100%; }
.filetab span, .filetab button { position: relative; }
.filetab button svg { width: 8px; height: 8px; stroke-width: 2; color: #888; }
.newtab { margin-bottom: 4px; }
.newtab svg { width: 18px; height: 13px; }

.toolbars { flex: 0 0 39px; display: flex; flex-direction: column; gap: 2px; padding: 3px 0 4px; }
.toolrow { display: flex; height: 15px; color: #4b5259; }
.toolbar { display: flex; align-items: center; background: #f1f1f1; border-left: 5px solid #4a4a4a; }
.toolbar button { width: 15px; }
.toolbar hr { width: 4px; height: 13px; margin: 0; border: 0; border-left: 1px solid #aaa; background: #fff; }
.combo { position: relative; display: flex; align-items: center; height: 15px; background: #e4e4e4; border: 1px solid #cfcfcf; color: #111; padding-left: 2px; }
.combo select { flex: 1; width: 10px; height: 13px; line-height: 13px; padding-left: 2px; }
.combo select:disabled { color: #999; opacity: 1; }
.combo svg { width: 10px; height: 10px; color: #667; }
.combo::after { content: ""; flex: none; width: 5px; height: 5px; margin: 0 4px 3px 0; border: solid #666; border-width: 0 1px 1px 0; rotate: 45deg; }
.swatch { width: 7px; height: 7px; background: #b8000e; border: 1px solid #700; margin-left: 2px; }
.rule { height: 1px; background: #222; flex: 0 1 39px; margin-right: 2px; }
.mono { font-family: "Liberation Mono", monospace; font-size: 9px; }
.w-style { width: 78px; }
.w-space { width: 113px; padding-left: 3px; }
.w-layer { width: 194px; padding-left: 3px; }
.w-color { width: 98px; }
.w-type { width: 104px; }
.w-weight { width: 82px; }
.w-weight .rule { flex-basis: 22px; }
.w-plot { width: 76px; padding-left: 4px; background: #c9c9c9; }
.w-plot::after { border-color: #aaa; }

.body { flex: 1; min-height: 0; display: flex; }
.palette { flex: 0 0 69px; background: #f0f0f0; overflow: hidden; border-right: 1px solid #fff; }
.palette h2 { margin: 0 0 6px; height: 15px; background: #929292; border-left: 3px double #666; font: inherit; line-height: 15px; padding-left: 4px; }
.rows { list-style: none; margin: 0; padding: 0; display: grid; grid-auto-rows: 1fr; }
.rows + .rows { border-top: 1px solid #999; padding-top: 2px; }
.rows li { display: flex; align-items: center; gap: 2px; min-height: 0; }
.rows svg { width: 12px; height: 11px; }
.rows .blue { color: #2b568c; stroke-width: 2; }
.rows span { width: 40px; line-height: 11px; white-space: nowrap; font-family: "Noto Sans CJK SC", sans-serif; }
.spread { text-align-last: justify; }
.n2 { height: 24px; }
.n6 { height: 74px; }
.n7 { height: 85px; }
.n4 { height: 50px; }
.n16 { height: 189px; }
.rows.n16 { border-color: #f0f0f0; }

.work { flex: 1; min-width: 0; display: flex; flex-direction: column; margin-left: 3px; }
.stage { flex: 1; min-height: 0; display: flex; }
.side { flex: none; display: flex; flex-direction: column; padding-top: 5px; }
.draw-side { width: 19px; padding-right: 4px; }
.modify-side { width: 19px; padding: 4px 2px 0; gap: 7px; }
.vbar { background: #f1f1f1; display: flex; flex-direction: column; justify-content: space-between; align-items: center; color: #4b5a68; padding: 1px 0; }
.vbar button { flex: 0 1 14px; min-height: 0; }
.vbar svg { width: 12px; height: 12px; }
.draw-bar { height: 285px; }
.modify-bar { height: 258px; }
.order-bar { height: 89px; }
.vbar hr { width: 12px; height: 1px; margin: 0; border: 0; background: #aaa; }
.drawing { flex: 1; min-width: 0; display: flex; flex-direction: column; }
.view { flex: 1; min-height: 0; display: flex; }
.canvas { position: relative; flex: 1; min-width: 0; overflow: hidden; background: #020203; }
.model { width: 100%; height: 100%; }
.view-label { position: absolute; left: 2px; top: 2px; color: #ddd; font-size: 8px; line-height: 14px; white-space: nowrap; }
.cube { position: absolute; right: 9px; top: 9px; width: 80px; height: 80px; display: grid; grid-template: 22px 36px 22px / 20px 40px 20px; place-items: center; color: #bbb; font: 11px/14px "Noto Sans CJK SC", sans-serif; }
.cube::before { content: ""; position: absolute; inset: 4px; border: 8px solid #343434; border-radius: 50%; }
.cube span, .cube button { position: relative; }
.north { grid-column: 2; align-self: start; }
.west { grid-area: 2 / 1; justify-self: start; }
.east { grid-area: 2 / 3; justify-self: end; }
.south { grid-area: 3 / 2; align-self: end; }
.cube .face { grid-area: 2 / 2; width: 30px; height: 30px; background: #a9a9a9; color: #444; font-size: 17px; }
.wcs { position: absolute; right: 34px; top: 99px; width: 31px; height: 11px; border-radius: 3px; border: 1px solid #77798a; background: #8f90a0; color: #34353f; font-size: 7px; line-height: 8px; justify-content: flex-start; padding-left: 2px; }
.paw { position: absolute; right: 95px; bottom: 23px; width: 30px; height: 20px; fill: #aaa; stroke: none; }
.vscroll { flex: 0 0 15px; background: #efefef; padding: 2px; color: #555; }
.vscroll svg { width: 10px; height: 10px; }
.layouts { flex: 0 0 14px; display: flex; align-items: stretch; background: #f0f0f0; border-top: 1px solid #fff; padding-left: 1px; }
.nav { width: 12px; border-right: 1px solid #ccc; }
.nav svg { width: 7px; height: 8px; stroke-width: 1; color: #555; }
.layout { position: relative; padding: 0 7px 0 4px; }
.layout::after { content: ""; position: absolute; right: 0; top: 0; width: 1px; height: 100%; background: #333; rotate: 22deg; }
.layout.current { width: 37px; background: #000; color: #fff; clip-path: polygon(0 0, 100% 0, 86% 100%, 14% 100%); padding: 0; }
.hscroll { margin-left: auto; flex: 0 1 314px; display: flex; align-items: center; gap: 2px; color: #333; }
.hscroll svg { width: 11px; height: 10px; }
.split { width: 4px; height: 11px; background: #ccc; }
.thumb { width: 13px; height: 11px; background: #c8c8c8; }

.command { flex: 0 0 35px; margin-top: 3px; display: flex; }
.command-grip { flex: 0 0 17px; display: flex; justify-content: center; background: linear-gradient(#999, #444 60%); color: #fff; }
.command-grip svg { width: 10px; height: 10px; stroke-width: 2; }
.command-body { flex: 1; margin-left: 1px; }
.history { height: 16px; background: #c7c7c7; }
.prompt { height: 18px; display: flex; align-items: center; background: #fff; padding-left: 4px; white-space: nowrap; }
.prompt svg { width: 12px; height: 12px; }
.prompt > span { font: 13px/16px "Noto Sans CJK SC", sans-serif; }
.prompt code { font: 11px/16px "DejaVu Sans Mono", monospace; white-space: pre; }
.prompt kbd { display: inline-block; font: inherit; line-height: 16px; background: #ddd; border-radius: 2px; padding: 0 1px; }
.prompt em { font-style: normal; color: #1c1ca0; }

.status { flex: 0 0 12px; overflow: hidden; display: flex; align-items: flex-start; background: linear-gradient(#6d6d6d, #999); border-top: 1px solid #444; }
.status > * { height: 16px; display: flex; align-items: center; white-space: nowrap; }
.status .caret { background: #111; }
.ratio { flex: 0 0 69px; padding-left: 3px; gap: 3px; }
.coords { flex: 0 0 102px; gap: 13px; padding-left: 2px; font-size: 9px; }
.toggles button, .right button { width: 14px; height: 14px; background: #bbb; border: 1px solid #8a8a8a; }
.status svg { width: 11px; height: 11px; }
.status .toggles .on { background: #b5dcea; }
.right { margin-left: auto; flex: 0 0 385px; gap: 1px; }
.status .right .model-btn { width: 24px; }
.status .right .anno { width: 38px; font-size: 9px; margin-left: 14px; }

.baidu { position: absolute; right: 185px; bottom: 24px; width: 48px; color: #ddd; opacity: .75; }
.baidu strong { display: block; font: bold 40px/36px "Liberation Sans", sans-serif; color: #c4c4c4; }
.baidu span { display: block; font: 22px/24px "Liberation Sans", sans-serif; color: #e6e6e6; }
.brand { position: absolute; right: 0; bottom: 0; width: 200px; height: 95px; display: flex; align-items: flex-start; gap: 8px; padding: 18px 0 0 12px; background: #223056; color: #d0d3da; }
.deer { width: 44px; height: 60px; fill: #d0d3da; stroke: none; }
.antler { fill: none; stroke: #d0d3da; stroke-width: 1.2; }
.brand-name { display: flex; align-items: center; height: 37px; }
.brand-name span { font: 34px/36px "Roboto", sans-serif; }
.brand-name strong { font: bold 28px/36px "Noto Sans CJK SC", sans-serif; }
.brand-url { font: 23px/22px "DejaVu Sans", sans-serif; }
```
